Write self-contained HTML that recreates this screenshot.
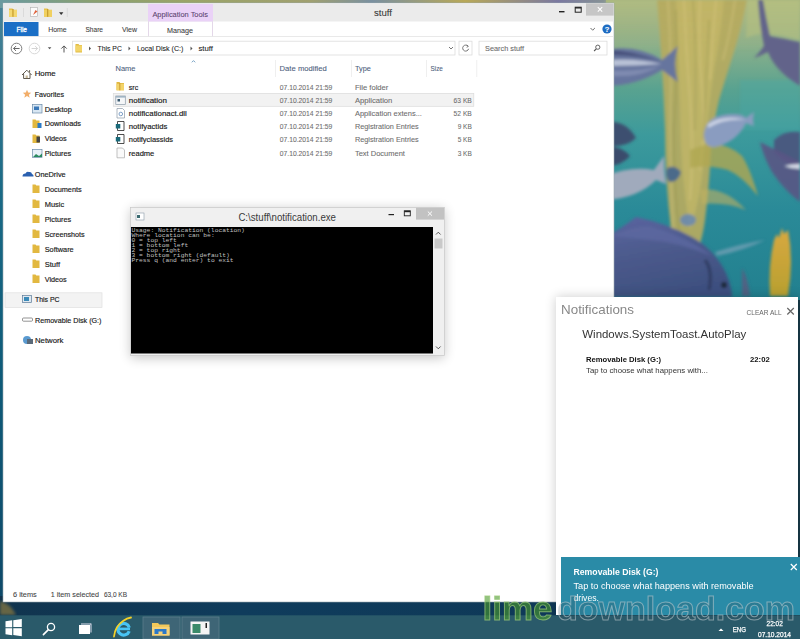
<!DOCTYPE html>
<html><head><meta charset="utf-8">
<style>
html,body{margin:0;padding:0;width:800px;height:639px;overflow:hidden;background:#1d4660;}
svg{display:block;font-family:"Liberation Sans",sans-serif;}
.m{font-family:"Liberation Mono",monospace;}
</style></head><body>
<svg width="800" height="639" viewBox="0 0 800 639">
<defs>
<linearGradient id="wpR" x1="0" y1="0" x2="0" y2="1">
<stop offset="0" stop-color="#a6b47e"/>
<stop offset="0.15" stop-color="#8cb08a"/>
<stop offset="0.3" stop-color="#58a290"/>
<stop offset="0.45" stop-color="#3c9a9c"/>
<stop offset="0.7" stop-color="#2a8a98"/>
<stop offset="1" stop-color="#22808f"/>
</linearGradient>
<linearGradient id="kelp" x1="0" y1="0" x2="0" y2="1">
<stop offset="0" stop-color="#c8b25a"/>
<stop offset="0.4" stop-color="#b09a44"/>
<stop offset="1" stop-color="#8c9a50"/>
</linearGradient>
<linearGradient id="wpL" x1="0" y1="0" x2="0" y2="1">
<stop offset="0" stop-color="#4a8498"/>
<stop offset="0.3" stop-color="#1a6a86"/>
<stop offset="0.6" stop-color="#0e5a78"/>
<stop offset="1" stop-color="#0e4666"/>
</linearGradient>
<linearGradient id="wpB" x1="0" y1="0" x2="1" y2="0">
<stop offset="0" stop-color="#11344e"/>
<stop offset="0.3" stop-color="#0f3c5c"/>
<stop offset="1" stop-color="#0e3654"/>
</linearGradient>
<linearGradient id="shadowR" x1="0" y1="0" x2="1" y2="0">
<stop offset="0" stop-color="#000" stop-opacity="0"/>
<stop offset="1" stop-color="#000" stop-opacity="0.12"/>
</linearGradient>
<filter id="soft" x="-5%" y="-5%" width="110%" height="110%"><feGaussianBlur stdDeviation="1.6"/></filter>
<linearGradient id="topwash" x1="0" y1="0" x2="0" y2="1"><stop offset="0" stop-color="#b0bc82" stop-opacity="0.9"/><stop offset="1" stop-color="#a0b488" stop-opacity="0"/></linearGradient>
<filter id="blur4" x="-20%" y="-20%" width="140%" height="140%"><feGaussianBlur stdDeviation="6"/></filter>
<linearGradient id="topstrip" x1="0" y1="0" x2="1" y2="0">
<stop offset="0" stop-color="#6a9aa0"/><stop offset="0.15" stop-color="#8aa070"/><stop offset="0.3" stop-color="#9aa468"/>
<stop offset="0.5" stop-color="#a0a070"/><stop offset="0.6" stop-color="#7a90a0"/><stop offset="0.75" stop-color="#b8a858"/>
<stop offset="0.9" stop-color="#7a78a0"/><stop offset="1" stop-color="#8a9a90"/></linearGradient>
<linearGradient id="bigfish" x1="0" y1="0" x2="0.3" y2="1">
<stop offset="0" stop-color="#5a64a0"/><stop offset="0.5" stop-color="#4c5a8c"/><stop offset="1" stop-color="#3e5080"/></linearGradient>
<linearGradient id="rkelp" x1="0" y1="0" x2="0" y2="1"><stop offset="0" stop-color="#d8a840"/><stop offset="1" stop-color="#b8a030"/></linearGradient>
</defs>

<!-- ===== WALLPAPER ===== -->
<rect x="0" y="0" width="800" height="639" fill="url(#wpL)"/>
<rect x="0" y="0" width="620" height="8" fill="url(#topstrip)"/>
<rect x="0" y="596" width="800" height="20" fill="url(#wpB)"/>
<rect x="796" y="290" width="4" height="326" fill="#183c4a"/>
<path d="M0 601 q10 2 16 14 h-16z" fill="#8a7a40" opacity="0.7" filter="url(#soft)"/>
<g id="wallR">
<rect x="606" y="0" width="194" height="300" fill="url(#wpR)"/>
<g filter="url(#soft)">
 <rect x="606" y="0" width="194" height="50" fill="url(#topwash)"/>
 <!-- kelp main band -->
 <path d="M657 0 h90 q-6 30 -14 55 q-8 25 -14 45 q-6 25 -8 50 q-2 40 -6 70 q-4 30 -14 40 q-14 -8 -20 -30 q-6 -50 -6 -100 q-2 -60 -8 -130z" fill="#b6aa5e" opacity="0.92"/>
 <path d="M676 0 h48 q-4 40 -10 70 q-6 40 -10 90 q-4 40 -14 70 q-10 -60 -10 -120 q-2 -60 -4 -110z" fill="#cabb6c" opacity="0.55"/>
 <g stroke="#dcca84" stroke-width="1.4" fill="none" opacity="0.55">
  <path d="M668 0 q4 60 2 120 q0 60 4 120"/>
  <path d="M684 0 q2 50 6 100 q4 50 0 100"/>
  <path d="M700 0 q-2 40 2 90 q4 40 -2 80"/>
  <path d="M716 0 q-4 40 -6 80"/>
  <path d="M735 0 q-4 30 -12 60"/>
 </g>
 <g stroke="#8a8a48" stroke-width="1.2" fill="none" opacity="0.45">
  <path d="M676 10 q2 60 -2 120 q0 60 6 110"/>
  <path d="M693 0 q4 60 2 130"/>
  <path d="M709 20 q-2 50 -6 120"/>
 </g>
 <!-- frond branching right -->
 <path d="M690 150 q30 -14 52 6 q8 12 16 40 q-16 -20 -30 -26 q-20 -6 -38 -2z" fill="#b0a852" opacity="0.8"/>
 <path d="M700 190 q24 -4 46 20 q-20 -8 -44 -6z" fill="#c0b060" opacity="0.6"/>
 <!-- right side greenish -->
 <path d="M748 0 h52 v40 q-20 -6 -36 -6 q-10 0 -18 4z" fill="#b6c080" opacity="0.6"/>
 <path d="M740 80 h60 v50 h-60z" fill="#48a8a8" opacity="0.35"/>
 <!-- right kelp -->
 <path d="M770 296 q-2 -30 4 -56 l3 -6 l2 4 l3 -10 l2 6 l4 -4 q6 30 0 66z" fill="url(#rkelp)"/>
 <!-- fish 1 (left top) -->
 <path d="M606 50 q30 -6 56 10 l16 -14 q-6 18 0 36 l-16 -12 q-26 16 -56 16z" fill="#66749e"/>
 <path d="M606 55 q30 -1 56 7 q-30 -12 -56 -12z" fill="#46507a"/>
 <path d="M608 60 q28 -2 54 4 q-28 2 -54 2z" fill="#c8d0e0" opacity="0.85"/>
 <path d="M610 70 q26 2 50 -4 q-20 12 -50 10z" fill="#8a96b8" opacity="0.7"/>
 <!-- big dark fish top right (tail + body) -->
 <path d="M758 0 h5 q3 18 7 36 q12 2 30 6 v44 q-14 -8 -24 -20 q-6 -8 -8 -14 q-8 4 -14 6 q6 -6 10 -12 q-4 -18 -6 -46z" fill="#62648a"/>
 <!-- fish 3 middle -->
 <path d="M704 134 q2 -20 30 -20 q8 0 12 4 l8 -6 q-2 8 0 14 l-8 -3 q-10 20 -32 24 q-10 0 -10 -13z" fill="#8a9cc0"/>
 <path d="M708 124 q16 -10 38 -4 q-22 -2 -38 8z" fill="#d0d8e8" opacity="0.9"/>
 <!-- right dark fish head + fin -->
 <path d="M774 140 q10 -10 26 -8 v34 q-16 -2 -26 -14z" fill="#4a5a80"/>
 <path d="M760 142 q20 10 40 20 v40 q-16 -12 -28 -30 q-8 -14 -12 -30z" fill="#5a5484" opacity="0.9"/>
 <path d="M784 166 q8 -2 16 -2 v5 q-8 0 -16 -3z" fill="#d8dce8"/>
 <!-- left dark fishes -->
 <path d="M606 122 q20 -2 30 16 q-10 10 -30 8z" fill="#3c5070"/>
 <path d="M606 146 q16 0 24 10 q-8 10 -24 10z" fill="#3a4c6c"/>
 <!-- light fish left middle -->
 <path d="M606 176 q24 -10 48 -6 l10 -14 q0 16 2 28 l-10 -4 q-18 18 -50 20z" fill="#a0aabc"/>
 <path d="M667 168 q8 -4 14 4 q-2 10 -12 10 q-4 -6 -2 -14z" fill="#4c6a8a"/>
 <!-- small fish -->
 <ellipse cx="688" cy="220" rx="8" ry="6" fill="#6a8ab0" opacity="0.9"/>
 <path d="M715 252 q25 -8 50 -12 q-20 10 -48 16z" fill="#88a8c0" opacity="0.6"/>
 <path d="M742 268 q6 10 8 28 h-8z" fill="#5a5a80" opacity="0.8"/>
 <!-- big fish bottom -->
 <path d="M606 236 q10 -4 30 -19 q30 6 56 20 q22 12 34 36 q6 14 6 24 h-126z" fill="url(#bigfish)"/>
 <path d="M612 236 q20 -10 36 -10 q34 8 64 30 q-34 -14 -62 -16 q-20 -2 -38 -4z" fill="#5c68a0" opacity="0.8"/>
 <circle cx="724" cy="285" r="3" fill="#1e2636"/>
 <path d="M705 260 q8 10 4 30" stroke="#2e3a60" stroke-width="3" fill="none"/>
</g>
</g>

<!-- ===== EXPLORER ===== -->
<g id="explorer">
<rect x="3" y="3" width="611" height="599" fill="#ffffff"/>
<rect x="3" y="3" width="611" height="599" fill="none" stroke="#9aa8b0" stroke-width="0.6"/>
<!-- title bar -->
<rect x="3.3" y="3.3" width="610.4" height="18.2" fill="#ebebeb"/>
<!-- QAT icons -->
<g>
 <path d="M9 8.5 h3.5 l1 1.2 h3.5 v7 h-8z" fill="#e8c24a"/>
 <rect x="9" y="10" width="8" height="6.8" fill="#f4d870"/>
 <rect x="12.3" y="9" width="1.3" height="7.8" fill="#c9a030"/>
 <rect x="23" y="8" width="0.8" height="9" fill="#d6d6d6"/>
 <rect x="30.5" y="7.5" width="7" height="9" fill="#fbfbfb" stroke="#b0b0b0" stroke-width="0.6"/>
 <path d="M33 15 l2.5 -5 l2 1.5z" fill="#e0603a"/>
 <path d="M44 8.5 h3.5 l1 1.2 h3.5 v7 h-8z" fill="#e8c24a"/>
 <rect x="44" y="10" width="8" height="6.8" fill="#f0d060"/>
 <rect x="47" y="9" width="1.3" height="7.8" fill="#c9a030"/>
 <path d="M59 12.3 h4.4 l-2.2 2.6z" fill="#333"/>
 <rect x="66.8" y="8" width="0.8" height="9" fill="#d6d6d6"/>
</g>
<text x="374" y="15.6" font-size="9" fill="#3a3a3a" textLength="18" lengthAdjust="spacingAndGlyphs" stroke="#3a3a3a" stroke-width="0.08">stuff</text>
<!-- min max close -->
<rect x="559" y="11" width="5.5" height="1.4" fill="#222"/>
<rect x="575.2" y="7.2" width="6" height="5" fill="none" stroke="#222" stroke-width="1"/>
<rect x="575.2" y="7.2" width="6" height="1.3" fill="#222"/>
<rect x="586" y="3.3" width="27.7" height="12.3" fill="#c6c6c6"/>
<path d="M597.8 7.2 l4.4 4.4 M602.2 7.2 l-4.4 4.4" stroke="#fff" stroke-width="1.1"/>
<!-- ribbon tabs -->
<rect x="148" y="4" width="65" height="17.5" fill="#ead2f7"/>
<text x="152.4" y="16.6" font-size="7.5" fill="#5c4470" textLength="55.6" lengthAdjust="spacingAndGlyphs" stroke="#5c4470" stroke-width="0.08">Application Tools</text>
<rect x="4" y="22" width="34.5" height="14.2" fill="#1b6fc6"/>
<text x="16.5" y="32.2" font-size="7.5" fill="#fff" textLength="10.5" lengthAdjust="spacingAndGlyphs" stroke="#fff" stroke-width="0.3">File</text>
<text x="48.2" y="32.4" font-size="7.5" fill="#3c3c3c" textLength="18.5" lengthAdjust="spacingAndGlyphs" stroke="#3c3c3c" stroke-width="0.08">Home</text>
<text x="85.5" y="32.4" font-size="7.5" fill="#3c3c3c" textLength="17.5" lengthAdjust="spacingAndGlyphs" stroke="#3c3c3c" stroke-width="0.08">Share</text>
<text x="122" y="32.4" font-size="7.5" fill="#3c3c3c" textLength="15" lengthAdjust="spacingAndGlyphs" stroke="#3c3c3c" stroke-width="0.08">View</text>
<rect x="148" y="21.5" width="0.7" height="15" fill="#d8c8e0"/>
<rect x="212.3" y="21.5" width="0.7" height="15" fill="#d8c8e0"/>
<text x="167" y="32.6" font-size="7.5" fill="#3c3c3c" textLength="26" lengthAdjust="spacingAndGlyphs" stroke="#3c3c3c" stroke-width="0.08">Manage</text>
<rect x="3.3" y="36.2" width="610.4" height="0.8" fill="#e4e4e4"/>
<path d="M590.5 28 l2.2 2.2 l2.2 -2.2" stroke="#707070" stroke-width="1" fill="none"/>
<circle cx="607" cy="29" r="4.6" fill="#1e6cc2"/>
<text x="607" y="32" font-size="7.5" font-weight="bold" fill="#fff" text-anchor="middle" stroke="#fff" stroke-width="0.08">?</text>
<!-- nav buttons -->
<circle cx="16.5" cy="48.5" r="5.3" fill="none" stroke="#707070" stroke-width="0.9"/>
<path d="M13.6 48.5 h6 M13.6 48.5 l2.4 -2.4 M13.6 48.5 l2.4 2.4" stroke="#555" stroke-width="0.9" fill="none"/>
<circle cx="34.5" cy="48.5" r="5.3" fill="none" stroke="#d4d4d4" stroke-width="0.9"/>
<path d="M31.6 48.5 h6 M37.6 48.5 l-2.4 -2.4 M37.6 48.5 l-2.4 2.4" stroke="#cfcfcf" stroke-width="0.9" fill="none"/>
<path d="M47.8 47.3 h3.6 l-1.8 2z" fill="#555"/>
<path d="M64 52.5 v-6.5 M61.3 48.6 l2.7 -2.7 l2.7 2.7" stroke="#555" stroke-width="1" fill="none"/>
<!-- address box -->
<rect x="72.5" y="41.2" width="382.5" height="13.8" fill="#fff" stroke="#dcdcdc" stroke-width="0.8"/>
<path d="M75.5 44 h3 l0.8 1 h2.7 v7.5 h-6.5z" fill="#e2bc44"/>
<rect x="75.5" y="45.5" width="6.5" height="6" fill="#f2d468"/>
<path d="M89 46.5 v4 l2 -2z" fill="#555"/>
<text x="97.5" y="51" font-size="7.5" fill="#222" textLength="24.4" lengthAdjust="spacingAndGlyphs" stroke="#222" stroke-width="0.08">This PC</text>
<path d="M128.5 46.5 v4 l2 -2z" fill="#555"/>
<text x="136.9" y="51" font-size="7.5" fill="#222" textLength="46.5" lengthAdjust="spacingAndGlyphs" stroke="#222" stroke-width="0.08">Local Disk (C:)</text>
<path d="M190.5 46.5 v4 l2 -2z" fill="#555"/>
<text x="198.4" y="51" font-size="7.5" fill="#222" textLength="14.5" lengthAdjust="spacingAndGlyphs" stroke="#222" stroke-width="0.08">stuff</text>
<path d="M449 47 l2 2 l2 -2" stroke="#666" stroke-width="0.9" fill="none"/>
<rect x="459" y="41.2" width="13" height="13.8" fill="#fff" stroke="#dcdcdc" stroke-width="0.8"/>
<path d="M468 46.2 a3 3 0 1 0 0.6 2.6" stroke="#666" stroke-width="0.9" fill="none"/>
<path d="M466.8 45 l1.6 1.4 l-1.8 0.9" stroke="#666" stroke-width="0.8" fill="none"/>
<rect x="479" y="41.2" width="128" height="13.8" fill="#fff" stroke="#dcdcdc" stroke-width="0.8"/>
<text x="485" y="51" font-size="7.5" fill="#6a6a6a" textLength="39" lengthAdjust="spacingAndGlyphs" stroke="#6a6a6a" stroke-width="0.08">Search stuff</text>
<circle cx="597.8" cy="47.2" r="2.1" fill="none" stroke="#555" stroke-width="0.9"/>
<path d="M596.3 48.8 l-2.2 2.2" stroke="#555" stroke-width="1.1"/>
<!-- column headers -->
<text x="115.5" y="71" font-size="7.5" fill="#4c607c" textLength="20" lengthAdjust="spacingAndGlyphs" stroke="#4c607c" stroke-width="0.08">Name</text>
<path d="M191.8 62.3 l1.7 -1.7 l1.7 1.7" stroke="#6a9ac0" stroke-width="0.9" fill="none"/>
<rect x="275" y="60" width="0.7" height="17" fill="#e8e8e8"/>
<text x="279.6" y="71" font-size="7.5" fill="#4c607c" textLength="47.2" lengthAdjust="spacingAndGlyphs" stroke="#4c607c" stroke-width="0.08">Date modified</text>
<rect x="351" y="60" width="0.7" height="17" fill="#e8e8e8"/>
<text x="355" y="71" font-size="7.5" fill="#4c607c" textLength="15.8" lengthAdjust="spacingAndGlyphs" stroke="#4c607c" stroke-width="0.08">Type</text>
<rect x="426" y="60" width="0.7" height="17" fill="#e8e8e8"/>
<text x="430.5" y="71" font-size="7.5" fill="#4c607c" textLength="12.4" lengthAdjust="spacingAndGlyphs" stroke="#4c607c" stroke-width="0.08">Size</text>
<rect x="476.5" y="60" width="0.7" height="17" fill="#e8e8e8"/>
<!-- selected row -->
<rect x="113.3" y="93.5" width="360.5" height="12.8" fill="#f2f2f2" stroke="#dadada" stroke-width="0.7"/>
<!-- icons -->
<path d="M116.5 82 h3 l0.8 1 h3.7 v7.3 h-7.5z" fill="#e2b840"/>
<rect x="116.5" y="83.8" width="7.5" height="6.5" fill="#f3d46a"/>
<rect x="119.2" y="83" width="1.2" height="7.3" fill="#cfa23a"/>
<rect x="115.8" y="96" width="9.5" height="8.5" fill="#f4f6f8" stroke="#8a9aa8" stroke-width="0.7"/>
<rect x="115.8" y="96" width="9.5" height="1.6" fill="#9fb4c4"/>
<rect x="117.5" y="99" width="2.5" height="2.5" fill="#3a5a70"/>
<path d="M117 108.5 h5.5 l2 2 v7.5 h-7.5z" fill="#fff" stroke="#8a98a8" stroke-width="0.7"/>
<circle cx="120.8" cy="114" r="1.8" fill="none" stroke="#4a7ab0" stroke-width="0.7"/>
<path d="M117.5 121.5 h6.5 v9 h-6.5z" fill="#fff" stroke="#222" stroke-width="0.8"/>
<rect x="115.8" y="124" width="4.5" height="4.5" fill="#1a6a7a"/>
<path d="M117.5 134.5 h6.5 v9 h-6.5z" fill="#fff" stroke="#222" stroke-width="0.8"/>
<rect x="115.8" y="137" width="4.5" height="4.5" fill="#1a6a7a"/>
<path d="M117 148 h5.5 l2 2 v7.8 h-7.5z" fill="#fafafa" stroke="#a8a8a8" stroke-width="0.7"/>
<!-- names -->
<g font-size="7.5" fill="#1a1a1a" stroke="#1a1a1a" stroke-width="0.16">
<text x="128.8" y="90" textLength="9.4" lengthAdjust="spacingAndGlyphs">src</text>
<text x="128.8" y="102.9" textLength="38.2" lengthAdjust="spacingAndGlyphs">notification</text>
<text x="128.8" y="116.1" textLength="58" lengthAdjust="spacingAndGlyphs">notificationact.dll</text>
<text x="128.8" y="129.2" textLength="38.5" lengthAdjust="spacingAndGlyphs">notifyactids</text>
<text x="128.8" y="142.1" textLength="44.2" lengthAdjust="spacingAndGlyphs">notifyclassids</text>
<text x="128.8" y="155.5" textLength="25.5" lengthAdjust="spacingAndGlyphs">readme</text>
</g>
<g font-size="7.5" fill="#6d6d6d" stroke="#6d6d6d" stroke-width="0.08">
<text x="279.8" y="90" textLength="52.5" lengthAdjust="spacingAndGlyphs">07.10.2014 21:59</text>
<text x="279.8" y="102.9" textLength="52.5" lengthAdjust="spacingAndGlyphs">07.10.2014 21:59</text>
<text x="279.8" y="116.1" textLength="52.5" lengthAdjust="spacingAndGlyphs">07.10.2014 21:59</text>
<text x="279.8" y="129.2" textLength="52.5" lengthAdjust="spacingAndGlyphs">07.10.2014 21:59</text>
<text x="279.8" y="142.1" textLength="52.5" lengthAdjust="spacingAndGlyphs">07.10.2014 21:59</text>
<text x="279.8" y="155.5" textLength="52.5" lengthAdjust="spacingAndGlyphs">07.10.2014 21:59</text>
<text x="354.9" y="90" textLength="33.5" lengthAdjust="spacingAndGlyphs">File folder</text>
<text x="354.9" y="102.9" textLength="37.5" lengthAdjust="spacingAndGlyphs">Application</text>
<text x="354.9" y="116.1" textLength="67" lengthAdjust="spacingAndGlyphs">Application extens...</text>
<text x="354.9" y="129.2" textLength="63.8" lengthAdjust="spacingAndGlyphs">Registration Entries</text>
<text x="354.9" y="142.1" textLength="63.8" lengthAdjust="spacingAndGlyphs">Registration Entries</text>
<text x="354.9" y="155.5" textLength="50" lengthAdjust="spacingAndGlyphs">Text Document</text>
</g>
<g font-size="7.5" fill="#6d6d6d" text-anchor="end" stroke="#6d6d6d" stroke-width="0.08">
<text x="471.8" y="102.9" textLength="18.2" lengthAdjust="spacingAndGlyphs">63 KB</text>
<text x="471.8" y="116.1" textLength="18.2" lengthAdjust="spacingAndGlyphs">52 KB</text>
<text x="471.8" y="129.2" textLength="14.1" lengthAdjust="spacingAndGlyphs">9 KB</text>
<text x="471.8" y="142.1" textLength="14.1" lengthAdjust="spacingAndGlyphs">5 KB</text>
<text x="471.8" y="155.5" textLength="14.1" lengthAdjust="spacingAndGlyphs">3 KB</text>
</g>
<!-- nav pane -->
<rect x="5" y="292.8" width="97" height="14.8" fill="#f3f3f3" stroke="#e0e0e0" stroke-width="0.7"/>
<g>
 <path d="M22 75 l4.8 -4.8 l4.8 4.8 M23.6 73.6 v4.9 h6.4 v-4.9 M29.6 70.2 v2.2" stroke="#50483a" stroke-width="0.9" fill="none"/><rect x="25.6" y="75.5" width="2.2" height="2.5" fill="#c8b898"/>
 <path d="M27 89.8 l1.2 2.8 l3 0.2 l-2.3 1.9 l0.8 3 l-2.7 -1.6 l-2.7 1.6 l0.8 -3 l-2.3 -1.9 l3 -0.2z" fill="#f2ae6a"/>
 <rect x="32.5" y="104.5" width="9.5" height="8.5" fill="#d8e6f2" stroke="#6a8aa8" stroke-width="0.7"/>
 <rect x="34" y="106.5" width="5" height="3.5" fill="#3a78b8"/>
 <path d="M32.5 119.5 h3 l0.8 1 h3.2 v7.5 h-7z" fill="#e2b840"/>
 <rect x="37.5" y="123" width="4" height="5" fill="#2a7ac8"/>
 <path d="M32.5 134.5 h3 l0.8 1 h3.2 v7.5 h-7z" fill="#e2b840"/>
 <rect x="36.5" y="136.5" width="3.5" height="6" fill="#444"/>
 <rect x="32.5" y="149.5" width="9.5" height="8" fill="#e8f0f8" stroke="#6a8aa8" stroke-width="0.7"/>
 <path d="M33 157 l3 -3 l3 2 l3 -2.5 v3.5z" fill="#2a8a60"/>
 <path d="M22.5 176.5 q0 -3 3 -3 q1 -2.5 3.5 -1.5 q2.5 -0.5 3 2 q2 0.5 1.5 2.5z" fill="#2a60b0"/>
</g>
<g id="smallfolders">
 <path d="M32.5 184.5 h3 l0.8 1 h3.2 v7.5 h-7z" fill="#e2b840"/>
 <path d="M32.5 199.5 h3 l0.8 1 h3.2 v7.5 h-7z" fill="#e2b840"/>
 <path d="M32.5 214.5 h3 l0.8 1 h3.2 v7.5 h-7z" fill="#e2b840"/>
 <path d="M32.5 229.5 h3 l0.8 1 h3.2 v7.5 h-7z" fill="#e2b840"/>
 <path d="M32.5 244.5 h3 l0.8 1 h3.2 v7.5 h-7z" fill="#e2b840"/>
 <path d="M32.5 259.5 h3 l0.8 1 h3.2 v7.5 h-7z" fill="#e2b840"/>
 <path d="M32.5 274.5 h3 l0.8 1 h3.2 v7.5 h-7z" fill="#e2b840"/>
</g>
<rect x="22.5" y="295.5" width="9" height="7" fill="#dfe8f0" stroke="#5a7a98" stroke-width="0.7"/>
<rect x="24" y="297" width="5" height="4" fill="#3a8ab8"/>
<rect x="22.5" y="318" width="10" height="3.2" rx="1" fill="none" stroke="#666" stroke-width="0.7"/>
<circle cx="27" cy="340" r="4" fill="#5a9ad0"/>
<rect x="27" y="339" width="6" height="5" fill="#5a6a7a"/>
<g font-size="7.5" fill="#1a1a1a" stroke="#1a1a1a" stroke-width="0.16">
<text x="34.7" y="76.3" textLength="21" lengthAdjust="spacingAndGlyphs">Home</text>
<text x="34.7" y="96.6" textLength="29.3" lengthAdjust="spacingAndGlyphs">Favorites</text>
<text x="44.7" y="111.6" textLength="27.1" lengthAdjust="spacingAndGlyphs">Desktop</text>
<text x="44.7" y="126.4" textLength="36.3" lengthAdjust="spacingAndGlyphs">Downloads</text>
<text x="44.7" y="141.3" textLength="22" lengthAdjust="spacingAndGlyphs">Videos</text>
<text x="44.7" y="156.1" textLength="26.5" lengthAdjust="spacingAndGlyphs">Pictures</text>
<text x="34.7" y="176.7" textLength="31" lengthAdjust="spacingAndGlyphs">OneDrive</text>
<text x="44.7" y="191.7" textLength="37" lengthAdjust="spacingAndGlyphs">Documents</text>
<text x="44.7" y="206.9" textLength="19.5" lengthAdjust="spacingAndGlyphs">Music</text>
<text x="44.7" y="221.9" textLength="26.5" lengthAdjust="spacingAndGlyphs">Pictures</text>
<text x="44.7" y="237" textLength="40" lengthAdjust="spacingAndGlyphs">Screenshots</text>
<text x="44.7" y="252.1" textLength="29" lengthAdjust="spacingAndGlyphs">Software</text>
<text x="44.7" y="267.1" textLength="15.5" lengthAdjust="spacingAndGlyphs">Stuff</text>
<text x="44.7" y="282.3" textLength="22" lengthAdjust="spacingAndGlyphs">Videos</text>
<text x="35" y="302.4" textLength="24.5" lengthAdjust="spacingAndGlyphs">This PC</text>
<text x="35" y="322.6" textLength="66.5" lengthAdjust="spacingAndGlyphs">Removable Disk (G:)</text>
<text x="35" y="343" textLength="28.5" lengthAdjust="spacingAndGlyphs">Network</text>
</g>
<!-- status bar -->
<g font-size="7.5" fill="#444" stroke="#444" stroke-width="0.08">
<text x="13" y="596.6" textLength="23.8" lengthAdjust="spacingAndGlyphs">6 items</text>
<text x="50.8" y="596.6" textLength="48.2" lengthAdjust="spacingAndGlyphs">1 item selected</text>
<text x="103.9" y="596.6" textLength="23.1" lengthAdjust="spacingAndGlyphs">63,0 KB</text>
</g>
</g>

<!-- ===== CONSOLE -->
<g id="console">
<rect x="130.5" y="209" width="314" height="149" fill="#000" opacity="0.22" filter="url(#blur4)"/>
<rect x="130.5" y="207.5" width="314" height="148" fill="#f0f0f0" stroke="#c8c8c8" stroke-width="0.7"/>
<rect x="136" y="213" width="8" height="7" fill="#fff" stroke="#8a9aa8" stroke-width="0.6"/>
<rect x="137" y="215" width="3" height="3" fill="#3a6a70"/>
<text x="238.4" y="221.2" font-size="10" fill="#3a3a3a" textLength="97.6" lengthAdjust="spacingAndGlyphs">C:\stuff\notification.exe</text>
<rect x="388.5" y="214" width="5.5" height="1.2" fill="#222"/>
<rect x="404.3" y="210.8" width="6" height="5" fill="none" stroke="#222" stroke-width="0.9"/>
<rect x="404.3" y="210.8" width="6" height="1.4" fill="#222"/>
<rect x="416" y="207.8" width="28" height="11.8" fill="#c2c2c2"/>
<path d="M427.8 211.5 l4.2 4.2 M432 211.5 l-4.2 4.2" stroke="#fff" stroke-width="1"/>
<rect x="131" y="227" width="302" height="126.5" fill="#000"/>
<rect x="433" y="227" width="10.5" height="126.5" fill="#f0f0f0"/>
<rect x="434.5" y="238.5" width="8" height="10" fill="#c9c9c9"/>
<path d="M436 234.5 l2.3 -2.3 l2.3 2.3" stroke="#444" stroke-width="0.9" fill="none"/>
<path d="M436 346.5 l2.3 2.3 l2.3 -2.3" stroke="#444" stroke-width="0.9" fill="none"/>
<g class="m" font-size="5.8" fill="#c0c0c0" xml:space="preserve">
<text x="131.5" y="232.0" textLength="113.4" lengthAdjust="spacingAndGlyphs">Usage: Notification (location)</text>
<text x="131.5" y="237.0" textLength="83.2" lengthAdjust="spacingAndGlyphs">Where location can be:</text>
<text x="131.5" y="242.0" textLength="45.4" lengthAdjust="spacingAndGlyphs">0 = top left</text>
<text x="131.5" y="247.0" textLength="56.7" lengthAdjust="spacingAndGlyphs">1 = bottom left</text>
<text x="131.5" y="252.0" textLength="49.1" lengthAdjust="spacingAndGlyphs">2 = top right</text>
<text x="131.5" y="257.0" textLength="98.3" lengthAdjust="spacingAndGlyphs">3 = bottom right (default)</text>
<text x="131.5" y="262.0" textLength="102.1" lengthAdjust="spacingAndGlyphs">Press q (and enter) to exit</text>
</g>
</g>
<!-- ===== NOTIF -->
<g id="notif">
<rect x="556" y="297" width="244" height="330" fill="#000" opacity="0.2" filter="url(#blur4)"/>
<rect x="556" y="297" width="242" height="318" fill="#ffffff"/>
<text x="561" y="314" font-size="13.5" fill="#888888" textLength="73" lengthAdjust="spacingAndGlyphs">Notifications</text>
<text x="746.6" y="314.5" font-size="7.8" fill="#666" textLength="35" lengthAdjust="spacingAndGlyphs">CLEAR ALL</text>
<path d="M787.3 308 l6.5 6.5 M793.8 308 l-6.5 6.5" stroke="#666" stroke-width="1.2"/>
<text x="582.3" y="338" font-size="11.8" fill="#333" textLength="164" lengthAdjust="spacingAndGlyphs">Windows.SystemToast.AutoPlay</text>
<text x="586" y="361.7" font-size="8" font-weight="bold" fill="#111" textLength="75" lengthAdjust="spacingAndGlyphs">Removable Disk (G:)</text>
<text x="750" y="361.7" font-size="8" font-weight="bold" fill="#111" textLength="19.7" lengthAdjust="spacingAndGlyphs">22:02</text>
<text x="586" y="372.7" font-size="8" fill="#333" textLength="121.8" lengthAdjust="spacingAndGlyphs">Tap to choose what happens with...</text>
<rect x="561" y="557" width="239" height="58" fill="#2a8ba7"/>
<text x="573.5" y="575.4" font-size="9" font-weight="bold" fill="#fff" textLength="85" lengthAdjust="spacingAndGlyphs">Removable Disk (G:)</text>
<text x="573.5" y="588.7" font-size="9" fill="#fff" textLength="180.2" lengthAdjust="spacingAndGlyphs">Tap to choose what happens with removable</text>
<text x="573.5" y="600.8" font-size="9" fill="#fff" textLength="25.5" lengthAdjust="spacingAndGlyphs">drives.</text>
<path d="M790.8 564 l6 6 M796.8 564 l-6 6" stroke="#fff" stroke-width="1.2"/>
</g>
<!-- ===== TASKBAR ===== -->
<g id="taskbar">
<rect x="0" y="615.3" width="800" height="24" fill="#2a5a6a"/>
<!-- start -->
<path d="M5.5 621.3 l6.7 -1 v7 h-6.7z M13.3 620.2 l8.5 -1.2 v8 h-8.5z M5.5 628.3 h6.7 v7 l-6.7 -1z M13.3 628.3 h8.5 v8 l-8.5 -1.2z" fill="#fff"/>
<!-- search -->
<circle cx="51" cy="627" r="3.6" fill="none" stroke="#fff" stroke-width="1.3"/>
<path d="M48.4 629.6 l-5 5" stroke="#fff" stroke-width="1.6" stroke-linecap="round"/>
<!-- task view -->
<rect x="79" y="625" width="11" height="9" fill="#fff"/>
<rect x="81" y="623.5" width="10" height="1" fill="#dde"/>
<rect x="90.5" y="623.5" width="1" height="9" fill="#dde"/>
<!-- IE -->
<path d="M129.2 631.2 A5.8 5.8 0 1 1 129.3 627.6" stroke="#48c4f4" stroke-width="3.2" fill="none"/>
<rect x="118.5" y="627.6" width="11.5" height="2.6" fill="#48c4f4"/>
<path d="M114 636.5 q1 -10 9 -15.5 q4 -3 8 -3.5" stroke="#f2d02a" stroke-width="1.8" fill="none" stroke-linecap="round"/>
<!-- explorer btn -->
<rect x="143" y="617" width="37" height="22" fill="#3e6576" stroke="#5a7d8c" stroke-width="0.8"/>
<path d="M152 623 h6 l1.5 1.5 h10 v11 h-17.5z" fill="#f2c85a"/>
<rect x="152" y="627" width="17.5" height="8.5" fill="#f5d27a"/>
<rect x="154.5" y="629" width="12" height="5" fill="#2a78c8"/>
<rect x="158.5" y="631.5" width="4" height="3" fill="#f5d27a"/>
<!-- console btn -->
<rect x="182" y="617" width="37" height="22" fill="#3e6576" stroke="#5a7d8c" stroke-width="0.8"/>
<rect x="190.5" y="621.5" width="19" height="13" fill="#f4f4f4"/>
<rect x="192.5" y="624" width="8" height="9" fill="#3a8a6a"/>
<rect x="205.5" y="623" width="1.5" height="5" fill="#222"/>
<!-- tray -->
<path d="M718.5 631 l2.5 -2.5 l2.5 2.5z" fill="#fff"/>
<text x="732.7" y="631.6" font-size="7.5" fill="#fff" stroke="#fff" stroke-width="0.25" textLength="13.3" lengthAdjust="spacingAndGlyphs">ENG</text>
<text x="766.6" y="626" font-size="7.5" fill="#fff" stroke="#fff" stroke-width="0.25" textLength="16.2" lengthAdjust="spacingAndGlyphs">22:02</text>
<text x="758" y="637" font-size="7.5" fill="#fff" stroke="#fff" stroke-width="0.25" textLength="33" lengthAdjust="spacingAndGlyphs">07.10.2014</text>
</g>

<!-- ===== WATERMARK -->
<g id="watermark" font-weight="bold" font-size="33">
<text x="482.5" y="620" textLength="70" lengthAdjust="spacingAndGlyphs" fill="#4a9a2c" fill-opacity="0.6" stroke="#9ac878" stroke-opacity="0.75" stroke-width="0.9">lime</text>
<text x="557" y="620" textLength="238" lengthAdjust="spacingAndGlyphs" fill="#34505c" fill-opacity="0.25" stroke="#c4d0d4" stroke-opacity="0.55" stroke-width="1">download.com</text>
</g>
</svg>
</body></html>
